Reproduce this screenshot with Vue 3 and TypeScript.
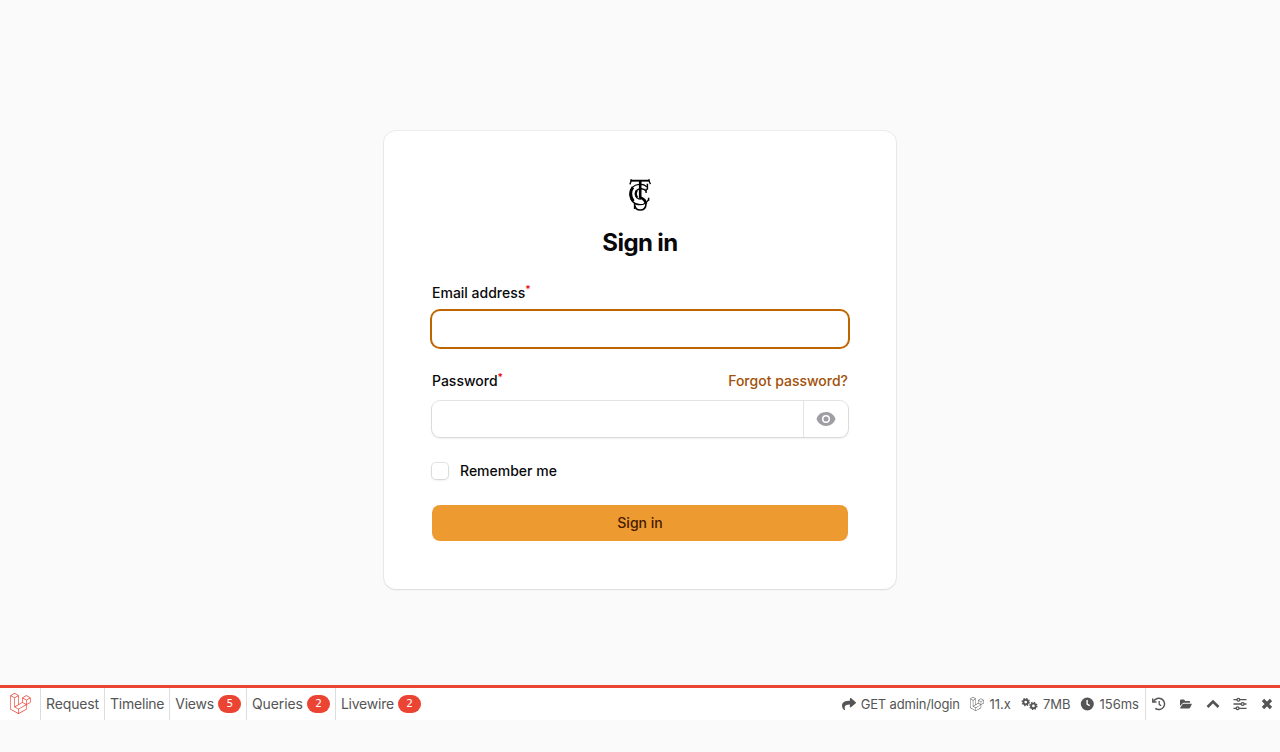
<script setup lang="ts">
import { ref } from 'vue'

interface Tab {
  label: string
  count?: number
}

const tabs: Tab[] = [
  { label: 'Request' },
  { label: 'Timeline' },
  { label: 'Views', count: 5 },
  { label: 'Queries', count: 2 },
  { label: 'Livewire', count: 2 },
]

const email = ref('')
const password = ref('')

const laravel =
  'M23.642 5.43a.364.364 0 01.014.1v5.149c0 .135-.073.26-.189.326l-4.323 2.49v4.934a.378.378 0 01-.188.326L9.93 23.949a.316.316 0 01-.066.027c-.008.002-.016.008-.024.01a.348.348 0 01-.192 0c-.011-.002-.02-.008-.03-.012-.02-.008-.042-.014-.062-.025L.533 18.755a.376.376 0 01-.189-.326V2.974c0-.033.005-.066.014-.098.003-.012.01-.02.014-.032a.369.369 0 01.023-.058c.004-.013.015-.022.023-.033l.033-.045c.012-.01.025-.018.037-.027.014-.012.027-.024.041-.034H.53L5.043.05a.375.375 0 01.375 0L9.93 2.647h.002c.015.01.027.021.04.033l.038.027c.013.014.02.03.033.045.008.011.02.021.025.033.01.02.017.038.024.058.003.011.01.021.013.032.01.031.014.064.014.098v9.652l3.76-2.164V5.527c0-.033.004-.066.013-.098.003-.01.01-.02.013-.032a.487.487 0 01.024-.059c.007-.012.018-.02.025-.033.012-.015.021-.03.033-.043.012-.012.025-.02.037-.028.014-.01.026-.023.041-.032h.001l4.513-2.598a.375.375 0 01.375 0l4.513 2.598c.016.01.027.021.042.031.012.01.025.018.036.028.013.014.022.03.034.044.008.012.019.021.024.033.011.02.018.04.024.06.006.01.012.021.015.032zm-.74 5.032V6.179l-1.578.908-2.182 1.256v4.283zm-4.51 7.75v-4.287l-2.147 1.225-6.126 3.498v4.325zM1.093 3.624v14.588l8.273 4.761v-4.325l-4.322-2.445-.002-.003H5.04c-.014-.01-.025-.021-.04-.031-.011-.01-.024-.018-.035-.027l-.001-.002c-.013-.012-.021-.025-.031-.04-.01-.011-.021-.022-.028-.036h-.003c-.008-.014-.013-.031-.02-.047-.006-.016-.014-.027-.018-.043a.49.49 0 01-.008-.057c-.002-.014-.006-.027-.006-.041V5.789l-2.18-1.257zM5.23.81L1.47 2.974l3.76 2.164 3.758-2.164zm1.956 13.505l2.182-1.256V3.624l-1.58.91-2.182 1.255v9.435zm11.581-10.95l-3.76 2.163 3.76 2.163 3.759-2.164zm-.376 4.978L16.21 7.087 14.63 6.18v4.283l2.182 1.256 1.58.908zm-8.65 9.654l5.514-3.148 2.756-1.572-3.757-2.163-4.323 2.489-3.941 2.27z'
</script>

<template>
  <div class="page">
    <main class="stage">
      <section class="card">
        <svg class="brand" width="24" height="32" viewBox="0 0 24 32" fill="none" stroke="#000" aria-label="Logo">
          <path stroke-width="1.9" d="M2.6 1.7h18.8" />
          <path stroke-width="1.4" d="M3.2.2c0 2-.4 3.4-1.4 5.2M20.9.2c.2 2 .5 3.4 1.6 5" />
          <path stroke-width="2.6" d="M12.2 2v17" />
          <path stroke-width="1.3" d="M18.8 7.9C16.6 5.5 14 5 11.2 5.3 5.4 5.8 1.9 9.7 1.9 15c0 6.3 4.5 10.7 10 10.7 4 0 6.8-1.8 8.6-5" />
          <path stroke-width="2.8" d="M5 8.2c-3.1 3.5-3 10.2.5 14" />
          <path stroke-width="1.5" d="M19.4 4.7v6M20.6 18.8v3" />
          <path stroke-width="1.3" d="M18 12.2c-1.2-2-3.2-2.7-5.6-2.4-3.3.4-5 2.3-5 5.2 0 3.2 2.4 5.2 5.5 5.2" />
          <path stroke-width="2.2" d="M8.8 11.7c-1.3 2-1.2 4.9.5 6.9" />
          <path stroke-width="1.4" d="M18.1 9.7v4.4" />
          <path stroke-width="2.8" d="M11.5 18.2c3.7 1.3 6.4 3.3 6.3 6.6" />
          <path stroke-width="1.6" d="M18 24.4c0 4.2-2.4 6.6-5.9 6.6-3 0-4.8-1.5-5.2-4.4" />
          <path stroke-width="1.5" d="M6.6 25v5" />
        </svg>
        <h1 class="title">Sign in</h1>

        <form class="form" @submit.prevent>
          <div class="field">
            <label class="label" for="email">Email address<sup>*</sup></label>
            <div class="control focused"><input id="email" v-model="email" type="email" /></div>
          </div>

          <div class="field password">
            <div class="label-row">
              <label class="label" for="password">Password<sup>*</sup></label>
              <a class="forgot">Forgot password?</a>
            </div>
            <div class="control">
              <input id="password" v-model="password" type="password" />
              <button class="reveal" type="button" aria-label="Show password">
                <svg width="20" height="20" viewBox="0 0 20 20" fill="currentColor">
                  <path d="M10 12.5a2.5 2.5 0 100-5 2.5 2.5 0 000 5z" />
                  <path fill-rule="evenodd" d="M.664 10.59a1.651 1.651 0 010-1.186A10.004 10.004 0 0110 3c4.257 0 7.893 2.66 9.336 6.41.147.381.146.804 0 1.186A10.004 10.004 0 0110 17c-4.257 0-7.893-2.66-9.336-6.41zM14 10a4 4 0 11-8 0 4 4 0 018 0z" />
                </svg>
              </button>
            </div>
          </div>

          <label class="remember"><span class="box"></span>Remember me</label>
          <button class="submit" type="submit">Sign in</button>
        </form>
      </section>
    </main>

    <footer class="bar">
      <div class="bar-logo">
        <svg width="21" height="21" viewBox="0 0 24 24" fill="#eb4432"><path :d="laravel" /></svg>
      </div>
      <div v-for="tab in tabs" :key="tab.label" class="tab">
        <span class="tab-label">{{ tab.label }}</span>
        <span v-if="tab.count" class="badge">{{ tab.count }}</span>
      </div>

      <div class="info">
        <div class="stat route">
          <svg width="14" height="14" viewBox="0 0 512 512" fill="currentColor">
            <path d="M503.691 189.836L327.687 37.851C312.281 24.546 288 35.347 288 56.015v80.053C127.371 137.907 0 170.1 0 322.326c0 61.441 39.581 122.309 83.333 154.132 13.653 9.931 33.111-2.533 28.077-18.631C66.066 312.814 132.917 274.316 288 272.085V360c0 20.7 24.3 31.453 39.687 18.164l176.004-152c11.071-9.562 11.086-26.753 0-36.328z" />
          </svg>
          <span>GET admin/login</span>
        </div>
        <div class="stat version">
          <svg width="14" height="14" viewBox="0 0 24 24" fill="currentColor"><path :d="laravel" /></svg>
          <span>11.x</span>
        </div>
        <div class="stat memory">
          <svg width="17" height="14" viewBox="0 0 17 14" fill="none" stroke="currentColor">
            <circle cx="4.7" cy="5.1" r="2.3" stroke-width="1.9" />
            <circle cx="4.7" cy="5.1" r="3.5" stroke-width="1.4" stroke-dasharray="1.4 1.349" />
            <circle cx="12.4" cy="8.9" r="2.3" stroke-width="1.9" />
            <circle cx="12.4" cy="8.9" r="3.5" stroke-width="1.4" stroke-dasharray="1.4 1.349" />
          </svg>
          <span>7MB</span>
        </div>
        <div class="stat time">
          <svg width="14" height="14" viewBox="0 0 14 14">
            <circle cx="7.3" cy="7" r="6.5" fill="currentColor" />
            <path d="M7.1 3v4.1l2.6 1.6" fill="none" stroke="#fff" stroke-width="1.4" />
          </svg>
          <span>156ms</span>
        </div>
      </div>

      <div class="actions">
        <svg width="14" height="14" viewBox="0 0 14 14" fill="none" stroke="currentColor" stroke-width="1.5">
          <path d="M1.7 4.4A5.7 5.7 0 1 1 3.3 11.4" />
          <path d="M.8 1.4v3.5h3.7" />
          <path d="M7.2 4v3.4l2 1.4" stroke-width="1.3" />
        </svg>
        <svg width="14" height="14" viewBox="0 0 14 14" fill="currentColor">
          <path d="M1 9V3.4Q1 2.5 2 2.5h2.9l1.4 1.4h3.9q.9 0 .9.9v1H5Q3.8 5.8 3.2 6.8Z" />
          <path d="M4.8 6.7h7.5q.7 0 .4.7l-1.6 3.3q-.5.8-1.3.8H1.6q-.8 0-.4-.8l2.1-3.2q.5-.8 1.5-.8Z" />
        </svg>
        <svg width="14" height="14" viewBox="0 0 14 14" fill="none" stroke="currentColor" stroke-width="2.7">
          <path d="M1.5 10 7 4.6l5.5 5.4" />
        </svg>
        <svg width="14" height="14" viewBox="0 0 14 14" fill="#fff" stroke="currentColor" stroke-width="1.3">
          <path d="M.5 2.7h13M.5 7h13M.5 11.3h13" />
          <circle cx="5.4" cy="2.7" r="1.4" />
          <circle cx="9.7" cy="7" r="1.4" />
          <circle cx="4.6" cy="11.3" r="1.4" />
        </svg>
        <svg width="14" height="14" viewBox="0 0 14 14" fill="none" stroke="currentColor" stroke-width="3.3">
          <path d="m3 3 8 8m0-8-8 8" />
        </svg>
      </div>
    </footer>
  </div>
</template>

<style>
body {
  background: #fafafa;
}
</style>

<style scoped>
.page {
  height: 752px;
  display: flex;
  flex-direction: column;
  overflow: hidden;
  background: #fafafa;
  font-family: Inter, sans-serif;
  color: #09090b;
}
.page * {
  box-sizing: border-box;
}
.stage {
  height: 685px;
  padding-top: 131px;
  display: flex;
  justify-content: center;
  align-items: flex-start;
}
.card {
  width: 512px;
  height: 458px;
  padding: 48px;
  display: flex;
  flex-direction: column;
  align-items: center;
  background: #fff;
  border-radius: 12px;
  box-shadow: 0 0 0 1px rgba(9, 9, 11, 0.05), 0 1px 2px rgba(0, 0, 0, 0.08);
}
.brand {
  flex: none;
}
.title {
  margin: 16px 0 22px;
  font-size: 24px;
  line-height: 32px;
  font-weight: 700;
  letter-spacing: -0.6px;
}
.form {
  width: 416px;
  display: flex;
  flex-direction: column;
}
.field,
.password {
  display: flex;
  flex-direction: column;
}
.field {
  gap: 6px;
}
.password {
  margin-top: 22px;
  gap: 8px;
}
.label,
.forgot,
.remember,
.submit {
  font-size: 14px;
  line-height: 24px;
  font-weight: 500;
}
.label sup {
  font-size: 10.5px;
  line-height: 0;
  vertical-align: baseline;
  position: relative;
  top: -5px;
  color: #e7000b;
}
.label-row {
  display: flex;
  justify-content: space-between;
}
.forgot {
  color: #a15008;
}
.control {
  height: 36px;
  display: flex;
  border-radius: 8px;
  background: #fff;
  box-shadow: 0 0 0 1px rgba(9, 9, 11, 0.1), 0 1px 2px 1px rgba(0, 0, 0, 0.06);
}
.focused {
  box-shadow: 0 0 0 2px #bf6500;
}
.control input {
  flex: 1;
  min-width: 0;
  border: 0;
  outline: 0;
  background: transparent;
  padding: 0 12px;
}
.reveal {
  width: 45px;
  padding: 0;
  border: 0;
  border-left: 1px solid #e4e4e7;
  background: none;
  display: flex;
  align-items: center;
  justify-content: center;
  color: #9f9fa3;
}
.remember {
  display: flex;
  align-items: center;
  gap: 12px;
  margin-top: 22px;
}
.box {
  width: 16px;
  height: 16px;
  border-radius: 4px;
  background: #fff;
  box-shadow: 0 0 0 1px rgba(9, 9, 11, 0.1), 0 1px 2px 1px rgba(0, 0, 0, 0.06);
}
.submit {
  height: 36px;
  margin-top: 22px;
  padding: 0;
  border: 0;
  border-radius: 8px;
  background: #ed9b31;
  color: #461901;
  font-family: inherit;
}
.bar {
  height: 35px;
  flex: none;
  display: flex;
  background: #fff;
  border-top: 3px solid #eb4432;
  color: #555;
}
.bar-logo {
  width: 41px;
  padding: 5px 0 0 10.4px;
  border-right: 1px solid #ddd;
}
.tab {
  height: 32px;
  display: flex;
  align-items: center;
  gap: 4.5px;
  padding: 0 5px;
  border-right: 1px solid #ddd;
  font-size: 14px;
  letter-spacing: -0.23px;
}
.tab-label {
  padding-bottom: 1px;
}
.tab:nth-child(2) {
  letter-spacing: -0.13px;
}
.tab:nth-child(5) {
  letter-spacing: -0.12px;
}
.tab:nth-child(6) {
  border-right: 0;
}
.badge {
  min-width: 22.6px;
  height: 18px;
  border-radius: 9px;
  background: #eb4432;
  color: #fff;
  font-family: 'DejaVu Sans', sans-serif;
  font-size: 10.5px;
  line-height: 17px;
  letter-spacing: 0;
  text-align: center;
}
.info {
  margin-left: auto;
  display: flex;
  gap: 10px;
  padding-right: 6px;
  border-right: 1px solid #ddd;
}
.stat {
  display: flex;
  align-items: center;
  gap: 5px;
  font-size: 13px;
}
.route {
  letter-spacing: -0.15px;
  margin-right: 0.6px;
}
.actions {
  width: 134px;
  display: flex;
  align-items: center;
  justify-content: space-between;
  padding: 0 6px;
}
</style>
